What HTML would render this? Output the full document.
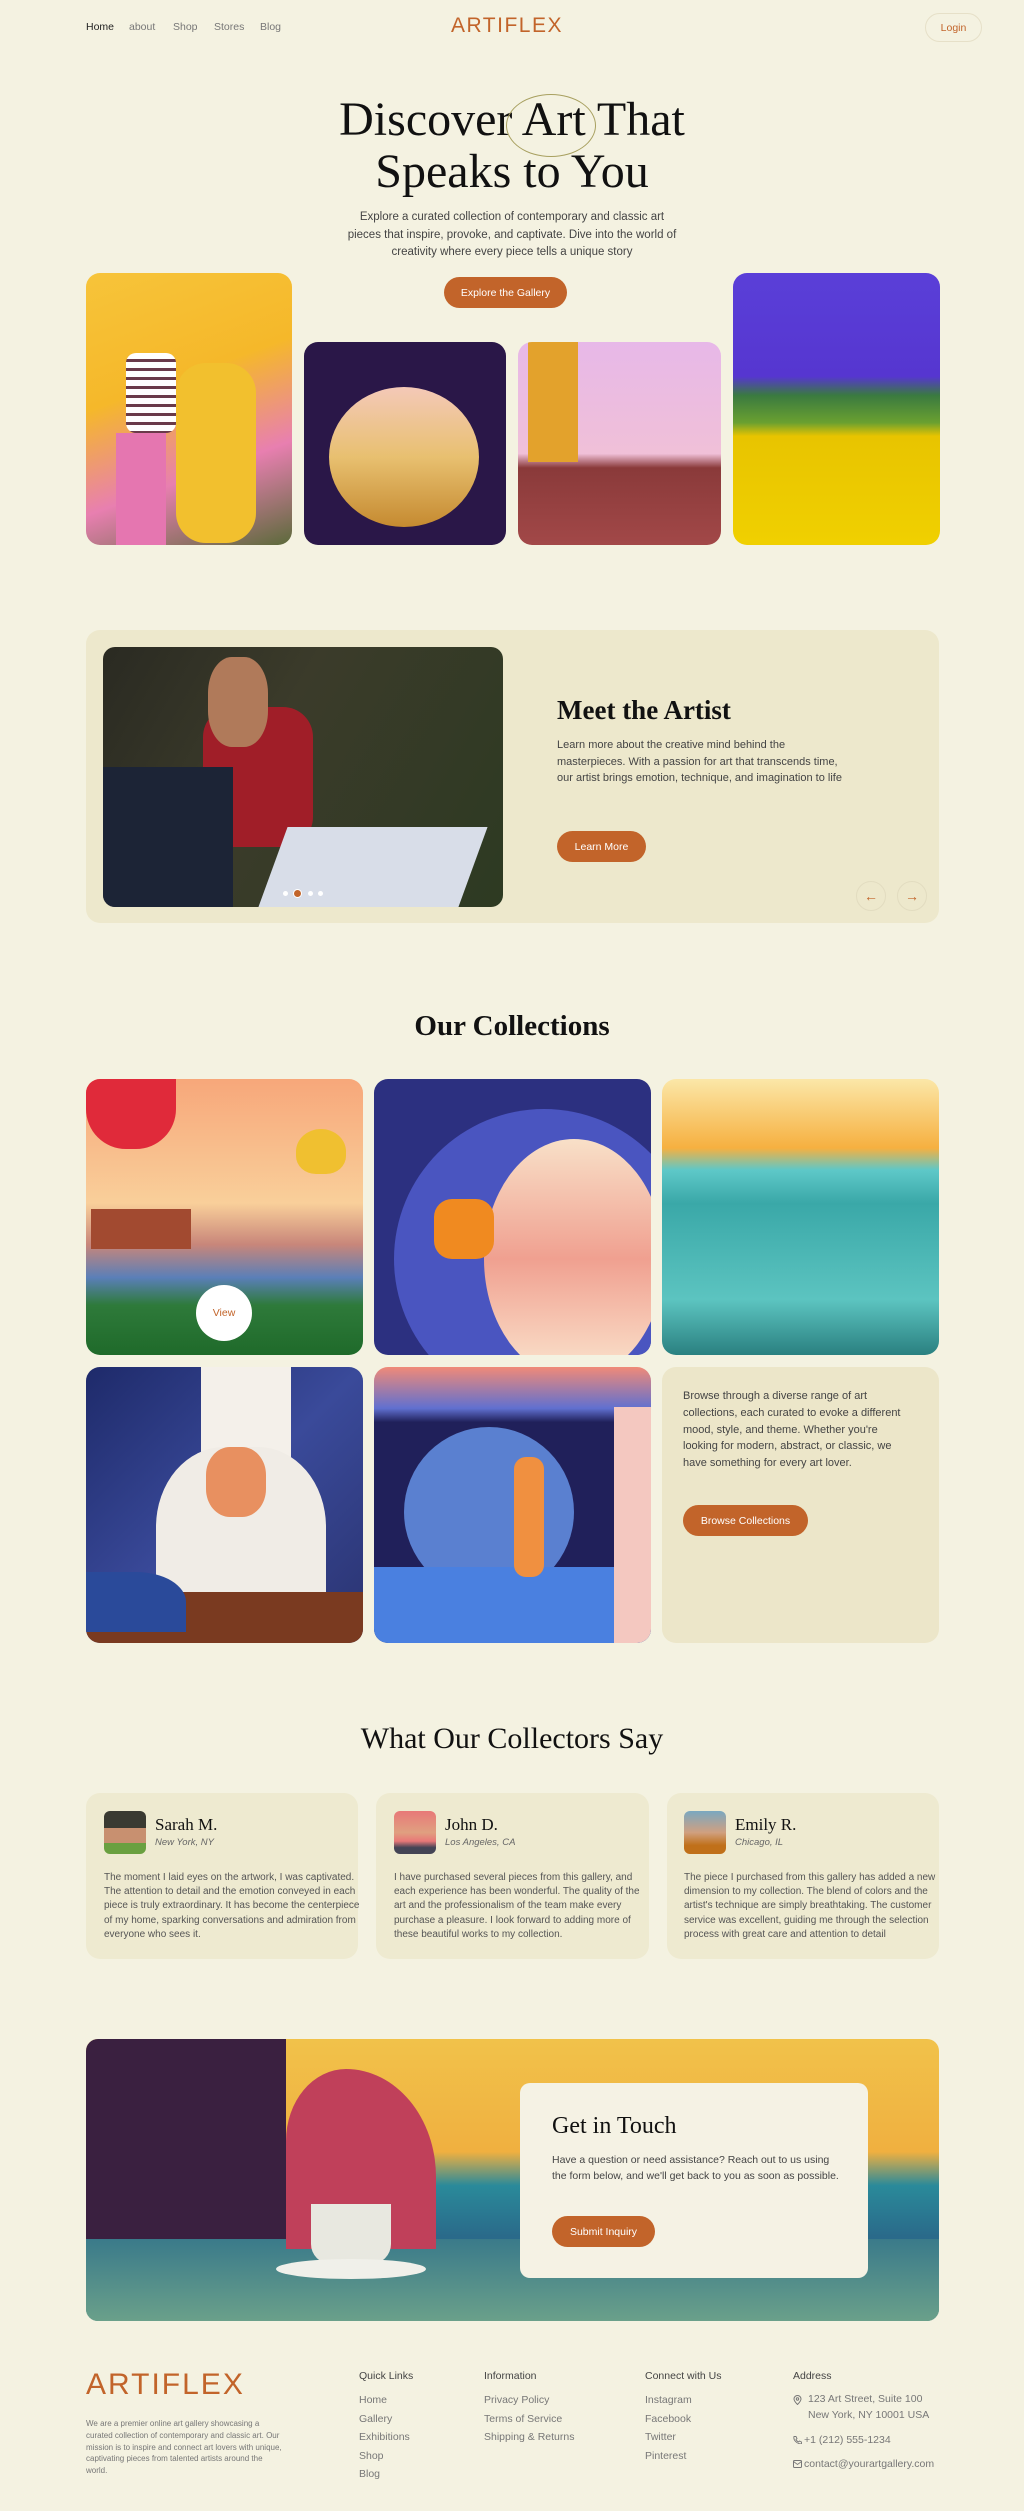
<!DOCTYPE html>
<html><head><meta charset="utf-8"><style>
*{margin:0;padding:0;box-sizing:border-box}
body{width:1024px;height:2511px;background:#f4f2e1;font-family:"Liberation Sans",sans-serif;color:#333;position:relative;overflow:hidden}
.a{position:absolute}
.serif{font-family:"Liberation Serif",serif;color:#111}
.btn{position:absolute;background:#c2642a;color:#fff;border-radius:20px;display:flex;align-items:center;justify-content:center;font-size:10.5px}
.nav a{position:absolute;top:21px;font-size:10.5px;color:#777;text-decoration:none}
.img{position:absolute;border-radius:14px;overflow:hidden}
.card{position:absolute;background:#eeead0;border-radius:14px}
.p{font-size:11.5px;line-height:17px;color:#444}
.t{font-size:10px;line-height:14.2px;color:#555}
.fh{position:absolute;top:2370px;font-size:10.5px;color:#444}
.fl{position:absolute;font-size:10.5px;color:#777;line-height:18.5px}
</style></head><body>
<div class="nav"><a style="left:86px;color:#222">Home</a><a style="left:129px">about</a><a style="left:173px">Shop</a><a style="left:214px">Stores</a><a style="left:260px">Blog</a></div>
<div class="a" style="left:451px;top:14px;font-size:21px;letter-spacing:1.5px;color:#c2642a">ARTIFLEX</div>
<div class="a" style="left:925px;top:13px;width:57px;height:29px;border:1px solid #e6e0c8;border-radius:15px;font-size:10.5px;color:#c2642a;display:flex;align-items:center;justify-content:center">Login</div>

<div class="a serif" style="left:0;width:1024px;top:94px;text-align:center;font-size:48px;line-height:52px">Discover Art That<br>Speaks to You</div>
<div class="a" style="left:506px;top:94px;width:90px;height:63px;border:1px solid #a8a060;border-radius:50%"></div>
<div class="a p" style="left:0;width:1024px;top:209px;text-align:center;font-size:11.5px;line-height:17.5px">Explore a curated collection of contemporary and classic art<br>pieces that inspire, provoke, and captivate. Dive into the world of<br>creativity where every piece tells a unique story</div>
<div class="btn" style="left:444px;top:277px;width:123px;height:31px">Explore the Gallery</div>

<div class="img" style="left:86px;top:273px;width:206px;height:272px;background:linear-gradient(160deg,#f7c43a 0%,#f5b82a 40%,#e87fb0 70%,#5b6a3a 100%)">
<div class="a" style="left:90px;top:90px;width:80px;height:180px;background:#f2c02e;border-radius:30px"></div>
<div class="a" style="left:40px;top:80px;width:50px;height:80px;background:repeating-linear-gradient(#fff 0 6px,#6a3a4a 6px 9px);border-radius:10px"></div>
<div class="a" style="left:30px;top:160px;width:50px;height:112px;background:#e576b0"></div></div>
<div class="img" style="left:304px;top:342px;width:202px;height:203px;background:#2a1748">
<div class="a" style="left:25px;top:45px;width:150px;height:140px;border-radius:50%;background:linear-gradient(#f4c9b8,#e8c070 50%,#c58a30)"></div></div>
<div class="img" style="left:518px;top:342px;width:203px;height:203px;background:linear-gradient(#e7b8e8 0%,#f0c0d8 55%,#8a3a3a 62%,#a24848 100%)">
<div class="a" style="left:10px;top:0;width:50px;height:120px;background:#e3a22c"></div></div>
<div class="img" style="left:733px;top:273px;width:207px;height:272px;background:linear-gradient(#5a3fd8 0%,#5636d0 38%,#3a7a40 45%,#6aa030 55%,#e8c400 60%,#f0d000 100%)"></div>

<div class="card" style="left:86px;top:630px;width:853px;height:293px;background:#ede8cc"></div>
<div class="img" style="left:103px;top:647px;width:400px;height:260px;background:linear-gradient(120deg,#2a2a22 0%,#3b3b2a 40%,#2d3a22 100%);border-radius:12px">
<div class="a" style="left:100px;top:60px;width:110px;height:140px;background:#a01e28;border-radius:30px"></div>
<div class="a" style="left:105px;top:10px;width:60px;height:90px;background:#b07a5a;border-radius:40%"></div>
<div class="a" style="left:0;top:120px;width:130px;height:140px;background:#1c2436"></div>
<div class="a" style="left:170px;top:180px;width:200px;height:80px;background:#d8dde8;transform:skewX(-20deg)"></div>
<div class="a" style="left:180px;top:244px;width:5px;height:5px;border-radius:50%;background:#fff"></div>
<div class="a" style="left:190px;top:242px;width:9px;height:9px;border-radius:50%;background:#c2642a;border:1px solid #fff"></div>
<div class="a" style="left:205px;top:244px;width:5px;height:5px;border-radius:50%;background:#fff"></div>
<div class="a" style="left:215px;top:244px;width:5px;height:5px;border-radius:50%;background:#fff"></div></div>
<div class="a serif" style="left:557px;top:695px;font-size:27px;font-weight:bold">Meet the Artist</div>
<div class="a p" style="left:557px;top:737px;font-size:11px;line-height:16.7px">Learn more about the creative mind behind the<br>masterpieces. With a passion for art that transcends time,<br>our artist brings emotion, technique, and imagination to life</div>
<div class="btn" style="left:557px;top:831px;width:89px;height:31px">Learn More</div>
<div class="a" style="left:856px;top:881px;width:30px;height:30px;border:1px solid #e2dcc0;border-radius:50%;color:#c2642a;text-align:center;line-height:28px;font-size:14px">←</div>
<div class="a" style="left:897px;top:881px;width:30px;height:30px;border:1px solid #e2dcc0;border-radius:50%;color:#c2642a;text-align:center;line-height:28px;font-size:14px">→</div>

<div class="a serif" style="left:0;width:1024px;top:1010px;text-align:center;font-size:29px;font-weight:bold">Our Collections</div>
<div class="img" style="left:86px;top:1079px;width:277px;height:276px;background:linear-gradient(#f7a77a 0%,#f9cf9a 45%,#c8867a 60%,#5a7fb8 72%,#2e7a3a 82%,#1f6a2a 100%)">
<div class="a" style="left:0;top:0;width:90px;height:70px;background:#e02a3a;border-radius:0 0 40px 40px"></div>
<div class="a" style="left:5px;top:130px;width:100px;height:40px;background:#a24a30"></div>
<div class="a" style="left:210px;top:50px;width:50px;height:45px;background:#f0c030;border-radius:50% 50% 40% 40%"></div>
<div class="a" style="left:110px;top:206px;width:56px;height:56px;background:#fff;border-radius:50%;color:#c2642a;font-size:10.5px;text-align:center;line-height:56px">View</div></div>
<div class="img" style="left:374px;top:1079px;width:277px;height:276px;background:#2c3080">
<div class="a" style="left:20px;top:30px;width:300px;height:300px;border-radius:50%;background:#4a55c0"></div>
<div class="a" style="left:110px;top:60px;width:180px;height:240px;border-radius:50%;background:linear-gradient(#f8e0c8,#f0a090 50%,#fbe6cf)"></div>
<div class="a" style="left:60px;top:120px;width:60px;height:60px;background:#f08a20;border-radius:30%"></div></div>
<div class="img" style="left:662px;top:1079px;width:277px;height:276px;background:linear-gradient(#fbe7a8 0%,#f6b040 25%,#5ec8c8 33%,#3aa8a8 45%,#5cc4c0 80%,#2a8080 100%)"></div>
<div class="img" style="left:86px;top:1367px;width:277px;height:276px;background:linear-gradient(135deg,#1e2a6a,#3a4a9a 50%,#2a3370)">
<div class="a" style="left:115px;top:0;width:90px;height:90px;background:#f4f0ea"></div>
<div class="a" style="left:70px;top:80px;width:170px;height:200px;background:#f0ece6;border-radius:40% 40% 0 0"></div>
<div class="a" style="left:120px;top:80px;width:60px;height:70px;background:#e89060;border-radius:40%"></div>
<div class="a" style="left:0;top:225px;width:277px;height:51px;background:#7a3a20"></div>
<div class="a" style="left:0;top:205px;width:100px;height:60px;background:#2a4a9a;border-radius:0 50% 0 0"></div></div>
<div class="img" style="left:374px;top:1367px;width:277px;height:276px;background:linear-gradient(#f08a78 0%,#6070d0 15%,#20205a 20%,#20205a 100%)">
<div class="a" style="left:30px;top:60px;width:170px;height:170px;border-radius:50%;background:#5a80d0"></div>
<div class="a" style="left:0;top:200px;width:277px;height:76px;background:#4a80e0"></div>
<div class="a" style="left:240px;top:40px;width:37px;height:236px;background:#f4c8c0"></div>
<div class="a" style="left:140px;top:90px;width:30px;height:120px;background:#f09040;border-radius:12px"></div></div>
<div class="card" style="left:662px;top:1367px;width:277px;height:276px;background:#ece6c9"></div>
<div class="a p" style="left:683px;top:1388px;font-size:11px;line-height:16.8px">Browse through a diverse range of art<br>collections, each curated to evoke a different<br>mood, style, and theme. Whether you're<br>looking for modern, abstract, or classic, we<br>have something for every art lover.</div>
<div class="btn" style="left:683px;top:1505px;width:125px;height:31px">Browse Collections</div>

<div class="a serif" style="left:0;width:1024px;top:1722px;text-align:center;font-size:30px">What Our Collectors Say</div>
<div class="card" style="left:86px;top:1793px;width:272px;height:166px"></div>
<div class="card" style="left:376px;top:1793px;width:273px;height:166px"></div>
<div class="card" style="left:667px;top:1793px;width:272px;height:166px"></div>
<div class="a" style="left:104px;top:1811px;width:42px;height:43px;border-radius:6px;background:linear-gradient(#3a3a32 40%,#c89070 40%,#c89070 75%,#6aa040 75%)"></div>
<div class="a" style="left:394px;top:1811px;width:42px;height:43px;border-radius:6px;background:linear-gradient(#e87878 0%,#e0a080 50%,#e87878 70%,#445 85%)"></div>
<div class="a" style="left:684px;top:1811px;width:42px;height:43px;border-radius:6px;background:linear-gradient(#7aa8c0 0%,#d0a080 50%,#c0701a 80%)"></div>
<div class="a serif" style="left:155px;top:1815px;font-size:17px">Sarah M.</div>
<div class="a serif" style="left:445px;top:1815px;font-size:17px">John D.</div>
<div class="a serif" style="left:735px;top:1815px;font-size:17px">Emily R.</div>
<div class="a" style="left:155px;top:1837px;font-size:9.5px;font-style:italic;color:#666">New York, NY</div>
<div class="a" style="left:445px;top:1837px;font-size:9.5px;font-style:italic;color:#666">Los Angeles, CA</div>
<div class="a" style="left:735px;top:1837px;font-size:9.5px;font-style:italic;color:#666">Chicago, IL</div>
<div class="a t" style="left:104px;top:1871px">The moment I laid eyes on the artwork, I was captivated.<br>The attention to detail and the emotion conveyed in each<br>piece is truly extraordinary. It has become the centerpiece<br>of my home, sparking conversations and admiration from<br>everyone who sees it.</div>
<div class="a t" style="left:394px;top:1871px">I have purchased several pieces from this gallery, and<br>each experience has been wonderful. The quality of the<br>art and the professionalism of the team make every<br>purchase a pleasure. I look forward to adding more of<br>these beautiful works to my collection.</div>
<div class="a t" style="left:684px;top:1871px">The piece I purchased from this gallery has added a new<br>dimension to my collection. The blend of colors and the<br>artist's technique are simply breathtaking. The customer<br>service was excellent, guiding me through the selection<br>process with great care and attention to detail</div>

<div class="img" style="left:86px;top:2039px;width:853px;height:282px;background:linear-gradient(#f1c24a 0%,#f0b040 40%,#2a8a9a 52%,#2a6a8a 70%,#3a7a7a 100%);border-radius:12px">
<div class="a" style="left:0;top:0;width:200px;height:200px;background:#3a2040"></div>
<div class="a" style="left:0;top:200px;width:853px;height:82px;background:linear-gradient(#3a7a8a,#6aa08a)"></div>
<div class="a" style="left:200px;top:30px;width:150px;height:180px;background:#c0405a;border-radius:40% 60% 0 0"></div>
<div class="a" style="left:225px;top:165px;width:80px;height:60px;background:#e8e8e0;border-radius:0 0 20px 20px"></div>
<div class="a" style="left:190px;top:220px;width:150px;height:20px;background:#f0f0ea;border-radius:50%"></div></div>
<div class="a" style="left:520px;top:2083px;width:348px;height:195px;background:#f5f2e4;border-radius:10px"></div>
<div class="a serif" style="left:552px;top:2113px;font-size:24px">Get in Touch</div>
<div class="a p" style="left:552px;top:2152px;font-size:10.5px;line-height:16px">Have a question or need assistance? Reach out to us using<br>the form below, and we'll get back to you as soon as possible.</div>
<div class="btn" style="left:552px;top:2216px;width:103px;height:31px">Submit Inquiry</div>

<div class="a" style="left:86px;top:2368px;font-size:30px;letter-spacing:2px;color:#c2642a">ARTIFLEX</div>
<div class="a" style="left:86px;top:2418px;font-size:8px;line-height:11.8px;color:#777">We are a premier online art gallery showcasing a<br>curated collection of contemporary and classic art. Our<br>mission is to inspire and connect art lovers with unique,<br>captivating pieces from talented artists around the<br>world.</div>
<div class="fh" style="left:359px">Quick Links</div>
<div class="fh" style="left:484px">Information</div>
<div class="fh" style="left:645px">Connect with Us</div>
<div class="fh" style="left:793px">Address</div>
<div class="fl" style="left:359px;top:2391px">Home<br>Gallery<br>Exhibitions<br>Shop<br>Blog</div>
<div class="fl" style="left:484px;top:2391px">Privacy Policy<br>Terms of Service<br>Shipping &amp; Returns</div>
<div class="fl" style="left:645px;top:2391px">Instagram<br>Facebook<br>Twitter<br>Pinterest</div>
<svg class="a" style="left:793px;top:2395px" width="9" height="10" viewBox="0 0 9 10"><path d="M4.5 9.5C2 7 1 5.5 1 4a3.5 3.5 0 017 0c0 1.5-1 3-3.5 5.5z" fill="none" stroke="#777" stroke-width="1"/><circle cx="4.5" cy="4" r="1.2" fill="none" stroke="#777"/></svg>
<div class="fl" style="left:808px;top:2392px;line-height:15.5px">123 Art Street, Suite 100<br>New York, NY 10001 USA</div>
<svg class="a" style="left:793px;top:2435px" width="9" height="9" viewBox="0 0 9 9"><path d="M1 1.5l2 0 1 2-1 1c.6 1.2 1.3 1.9 2.5 2.5l1-1 2 1v2C4 9 0 5 1 1.5z" fill="none" stroke="#777" stroke-width=".9"/></svg>
<div class="fl" style="left:804px;top:2431px">+1 (212) 555-1234</div>
<svg class="a" style="left:793px;top:2460px" width="9" height="8" viewBox="0 0 9 8"><rect x=".5" y=".5" width="8" height="7" rx="1" fill="none" stroke="#777"/><path d="M.5 1.5l4 3 4-3" fill="none" stroke="#777" stroke-width=".8"/></svg>
<div class="fl" style="left:804px;top:2455px">contact@yourartgallery.com</div>
</body></html>
